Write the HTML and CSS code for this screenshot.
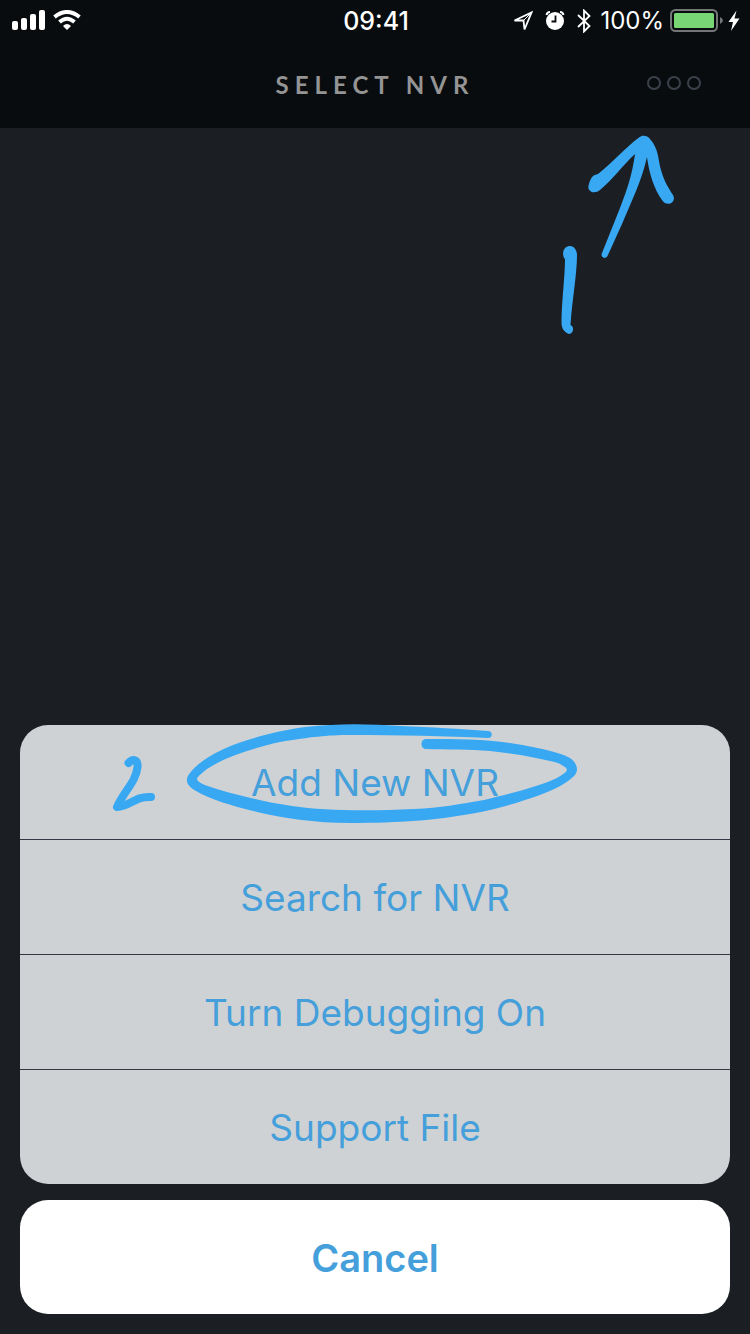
FILE: index.html
```html
<!DOCTYPE html>
<html lang="en">
<head>
<meta charset="utf-8">
<meta name="viewport" content="width=device-width, initial-scale=1">
<title>Select NVR</title>
<link rel="stylesheet" href="styles.css">
</head>
<body>
<div class="screen">
  <header class="header">
    <div class="status">
      <div class="status-left">
        <svg width="34" height="22" viewBox="0 1 34 22" fill="#fff" aria-hidden="true">
          <rect x="0" y="12" width="6" height="9" rx="2"/><rect x="9" y="9" width="6" height="12" rx="2"/><rect x="18" y="5" width="6" height="16" rx="2"/><rect x="27" y="1" width="6" height="20" rx="2"/>
        </svg>
        <svg width="28" height="22" viewBox="0 1 28 22" aria-hidden="true">
          <g fill="none" stroke="#fff" stroke-width="4"><path d="M1.500 8Q14-2 26.500 8"/><path d="M6.500 13Q14 6.500 21.500 13"/></g>
          <path d="M10 17Q14 13 18 17L14 21Z" fill="#fff"/>
        </svg>
      </div>
      <time class="clock">09:41</time>
      <div class="status-right">
        <svg class="location" width="20" height="22" viewBox="0 0 20 22" aria-hidden="true"><path d="M1.500 10.500L18.500 2.500L11.500 19.500L10.500 10.500Z" fill="none" stroke="#fff" stroke-width="1.800"/><path d="M10.500 10.500L18 3" stroke="#fff"/></svg>
        <svg class="alarm" width="20" height="22" viewBox="0 0 20 22" aria-hidden="true"><circle cx="10" cy="11" r="9" fill="#fff"/><path d="M1.500 5Q2 2 5 2M15 2Q18 2 18.500 5" fill="none" stroke="#fff" stroke-width="2"/><path d="M10.500 5.500V11.500H6.500" fill="none" stroke="#080c0f" stroke-width="1.800"/></svg>
        <svg class="bluetooth" width="14" height="24" viewBox="0 0 14 24" aria-hidden="true"><path d="M1 6L12.500 17L7 22.500V1.500L12.500 7L1 18" fill="none" stroke="#fff" stroke-width="1.800"/></svg>
        <span class="percent">100%</span>
        <svg class="battery" width="53" height="24" viewBox="0 0 53 24" aria-hidden="true"><rect x="1" y="1" width="46" height="21" rx="4.500" fill="none" stroke="#737577" stroke-width="2"/><rect x="4" y="4" width="40" height="15" rx="1.500" fill="#78d674"/><path d="M50 8Q56 11.500 50 15Z" fill="#737577"/></svg>
        <svg class="bolt" width="12" height="22" viewBox="0 0 12 22" aria-hidden="true"><path d="M8.500 0.500L0.500 12H5L3 21L11.500 8.500H6.500Z" fill="#fff"/></svg>
      </div>
    </div>
    <div class="nav">
      <h1 class="title">SELECT NVR</h1>
      <button class="more" type="button" aria-label="More options"><span class="ring"></span><span class="ring"></span><span class="ring"></span></button>
    </div>
  </header>

  <main class="content">
    <svg class="arrow-note" width="140" height="222" viewBox="550 128 140 222" fill="#39a8f3" aria-hidden="true">
      <path d="M639 137.500C642 135 647 135 650 139C659 149 658 160 661 170C664 181 669 189 673 195C677 202 667 208 662 200C654 189 649 173 647 157C642 180 632 200 622 224L607.500 256C605 260 600 257 602 253L620 208C628 187 632 175 635 154C622 166 613 179 600 190C594 195 586 191 589 184C591 177 593 175 598 174C613 162 625 148 639 137.500Z"/>
      <path d="M564 258C561 250 566 246 570 246C574 246 577 250 577 255C577 274 572 301 570.500 325C575 327 573 334 569 334C564 332 561.500 328 561.500 323C561.500 302 565 277 565 259Z"/>
    </svg>
  </main>

  <div class="actions" role="dialog" aria-label="NVR options">
    <div class="sheet">
      <button class="option" type="button">Add New NVR
        <svg class="choice-note" width="490" height="110" viewBox="100 720 490 110" fill="#39a8f3" aria-hidden="true">
          <path d="M128.500 763C132 759 138 758 137.500 767C136 782 124 791 117 807C130 807 134 796 151 797" fill="none" stroke="#39a8f3" stroke-width="8" stroke-linecap="round" stroke-linejoin="round"/>
          <path d="M488 731C493 731 493 738 488 738C445 736 400 735 350 735C327 735 311 737 280 742C250 749 225 757 207 769C202 773 197 777 197 779C197 783 210 787 220 790C242 796 264 802 292 806C325 811 370 811 414 809C440 808 460 804 484 800C508 794 538 787 557 778C571 770 569 769 558 763C539 758 517 754 490 751C470 749 446 750 426 749C420 749 420 739 426 739C455 739 485 739 510 743C535 747 560 752 570 758C577 763 580 771 573 777C564 786 544 794 525 800C510 805 492 810 470 814C437 820 400 823 350 823C315 823 281 818 253 811C233 806 209 799 196 791C187 786 184 780 190 773C199 761 216 752 233 745C255 737 277 731 305 727C340 723 370 724 400 726C432 727 460 729 488 731Z"/>
        </svg>
      </button>
      <button class="option" type="button">Search for NVR</button>
      <button class="option" type="button">Turn Debugging On</button>
      <button class="option" type="button">Support File</button>
    </div>
    <button class="cancel" type="button">Cancel</button>
  </div>
</div>
</body>
</html>
```

FILE: styles.css
```css
* { box-sizing: border-box; }

body {
  margin: 0;
  background: #1b1e23;
  font-family: Inter, "Liberation Sans", sans-serif;
}

button {
  border: 0;
  font: inherit;
  cursor: pointer;
}

svg { flex-shrink: 0; }

.screen {
  display: flex;
  flex-direction: column;
  min-height: 100vh;
}

.header { background: #080c0f; }

.status {
  display: grid;
  grid-template-columns: 1fr auto 1fr;
  align-items: center;
  height: 40px;
  padding: 2px 10px 0 12px;
  color: #fff;
}

.status-left {
  display: flex;
  gap: 7px;
}

.clock {
  font-size: 25px;
  font-weight: 500;
  line-height: 32px;
}

.status-right {
  display: flex;
  align-items: center;
  justify-content: flex-end;
}

.alarm { margin-left: 12px; }
.bluetooth { margin-left: 12px; }
.percent {
  margin-left: 9px;
  font-size: 24px;
  line-height: 32px;
}
.battery { margin-left: 6px; }
.bolt { margin-left: 5px; }

.nav {
  display: grid;
  grid-template-columns: 1fr auto 1fr;
  align-items: center;
  height: 88px;
  padding: 0 41px;
}

.title {
  grid-column: 2;
  margin: 0;
  padding-top: 2px;
  color: #949494;
  font-family: Lato, sans-serif;
  font-size: 24px;
  font-weight: 700;
  line-height: 32px;
  letter-spacing: 6px;
}

.more {
  display: flex;
  justify-self: end;
  gap: 6px;
  padding: 8px 8px 10px;
  background: none;
}

.ring {
  width: 14px;
  height: 14px;
  border: 2px solid #3b404b;
  border-radius: 50%;
}

.content {
  position: relative;
  flex: 1;
  min-height: 240px;
}

.arrow-note {
  position: absolute;
  top: 0;
  right: 60px;
}

.actions {
  display: flex;
  flex-direction: column;
  gap: 16px;
  padding: 0 20px 20px;
}

.sheet {
  display: flex;
  flex-direction: column;
  gap: 1px;
  border-radius: 28px;
  background: linear-gradient(#343842, #343842) center / 100% calc(100% - 120px) no-repeat;
}

.option,
.cancel {
  padding: 34px 20px 32px;
  color: #459fda;
  font-size: 37px;
  line-height: 48px;
  text-align: center;
}

.option {
  position: relative;
  background: #cfd2d5;
}

.option:first-child { border-radius: 28px 28px 0 0; }
.option:last-child { border-radius: 0 0 28px 28px; }

.choice-note {
  position: absolute;
  top: -5px;
  left: 50%;
  margin-left: -275px;
  pointer-events: none;
}

.cancel {
  border-radius: 28px;
  background: #fff;
  font-size: 38px;
  font-weight: 600;
}
```
